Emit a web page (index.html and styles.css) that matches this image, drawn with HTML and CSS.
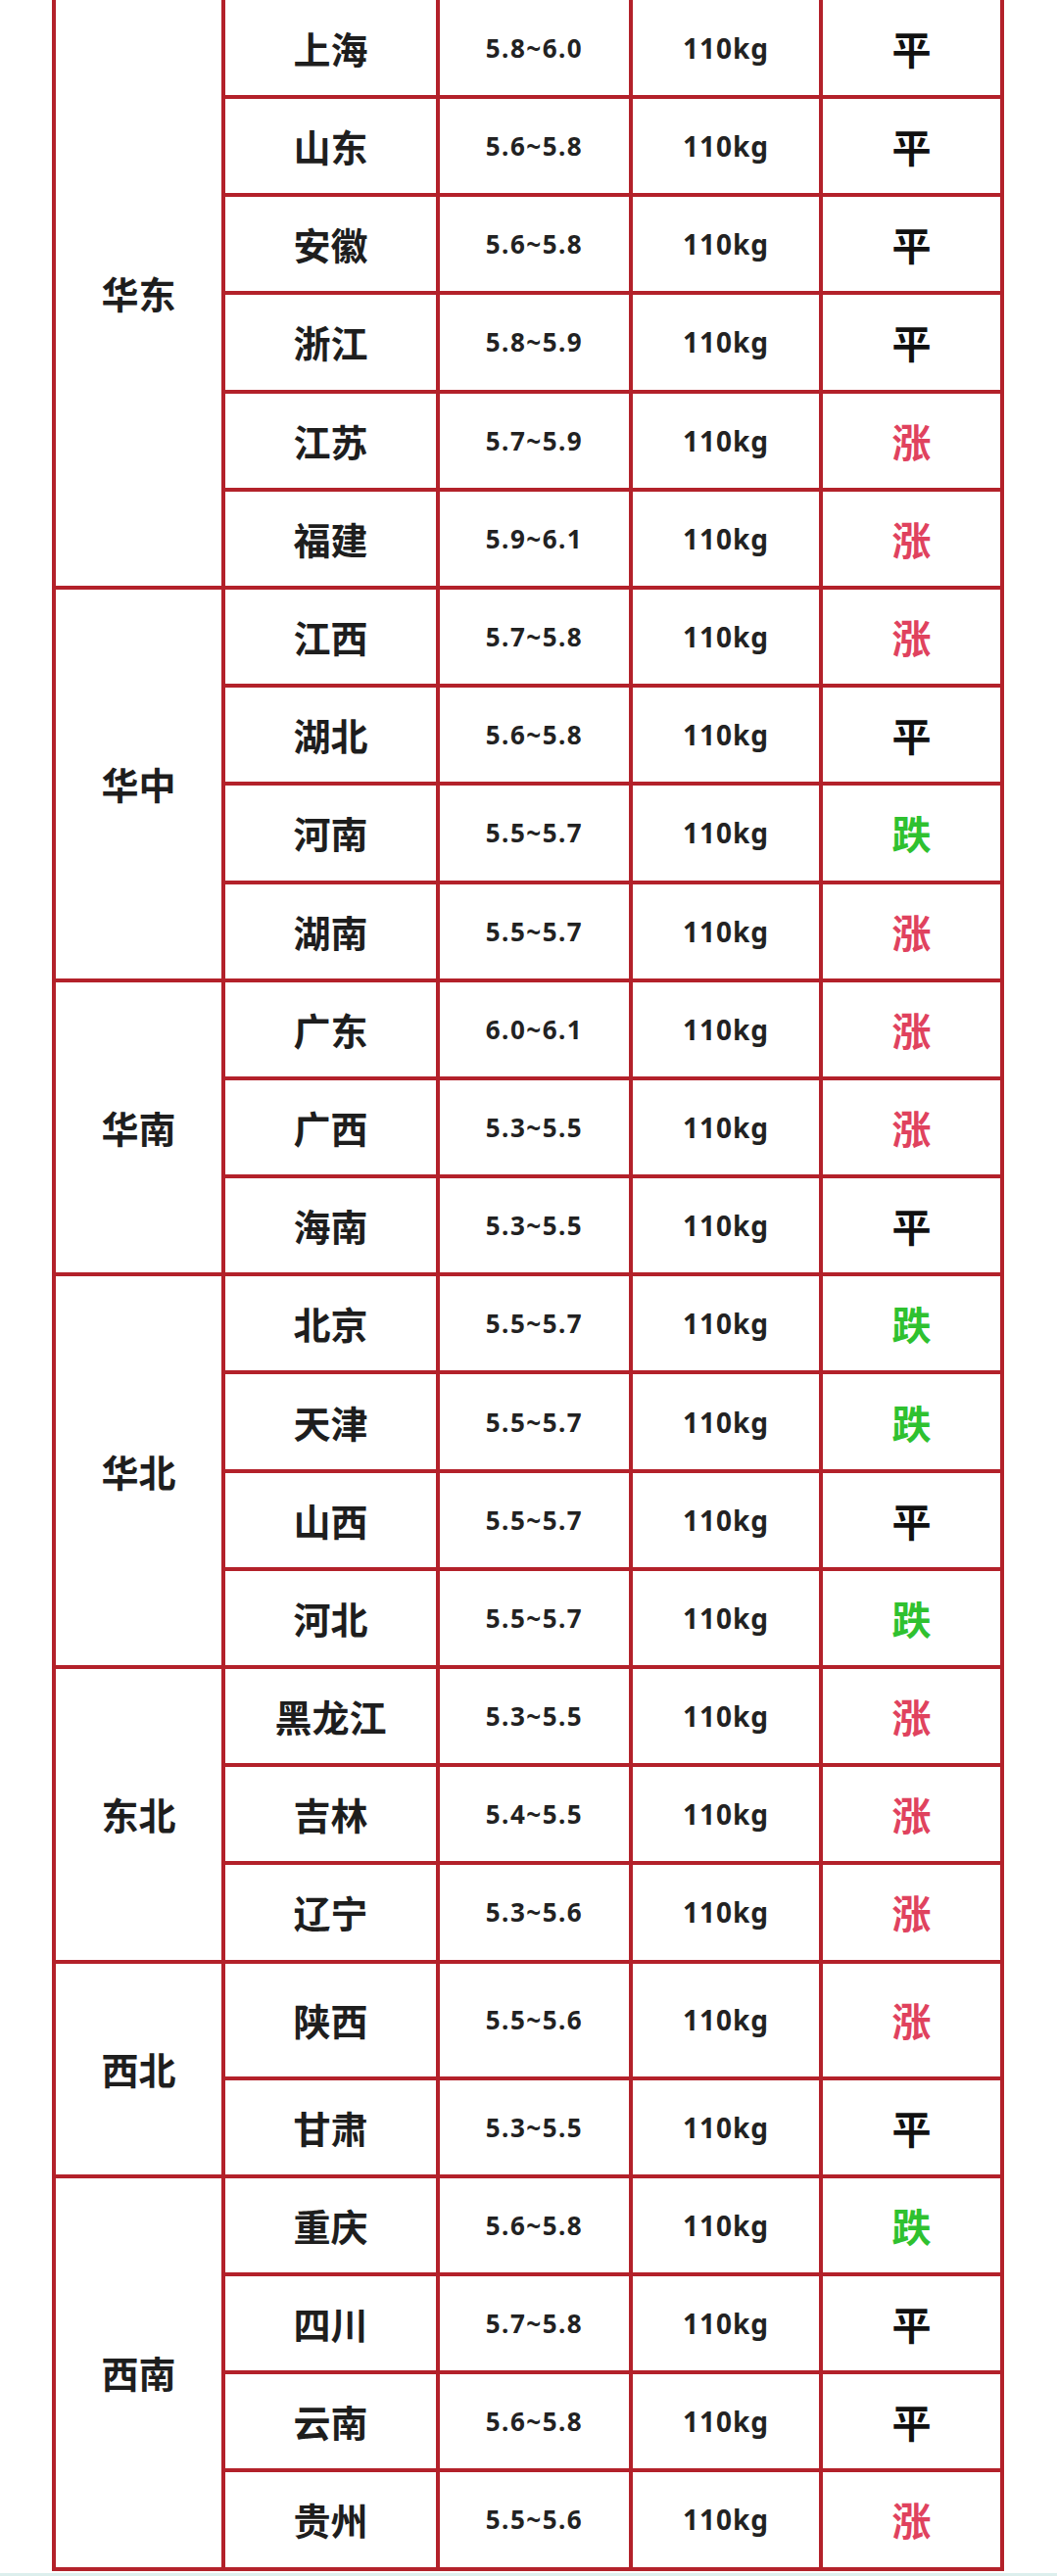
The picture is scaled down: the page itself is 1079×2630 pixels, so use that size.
FILE: index.html
```html
<!DOCTYPE html>
<html lang="zh-CN">
<head>
<meta charset="utf-8">
<title>生猪价格表</title>
<link rel="stylesheet" href="styles.css">
</head>
<body>
<div class="page">
<table class="price-table">
  <colgroup>
    <col class="c-region"><col class="c-prov"><col class="c-price"><col class="c-weight"><col class="c-trend">
  </colgroup>
  <tbody>
    <tr class="first"><td class="region" rowspan="6">华东</td><td class="prov">上海</td><td class="price">5.8~6.0</td><td class="weight">110kg</td><td class="trend flat">平</td></tr>
    <tr><td class="prov">山东</td><td class="price">5.6~5.8</td><td class="weight">110kg</td><td class="trend flat">平</td></tr>
    <tr><td class="prov">安徽</td><td class="price">5.6~5.8</td><td class="weight">110kg</td><td class="trend flat">平</td></tr>
    <tr><td class="prov">浙江</td><td class="price">5.8~5.9</td><td class="weight">110kg</td><td class="trend flat">平</td></tr>
    <tr><td class="prov">江苏</td><td class="price">5.7~5.9</td><td class="weight">110kg</td><td class="trend up">涨</td></tr>
    <tr><td class="prov">福建</td><td class="price">5.9~6.1</td><td class="weight">110kg</td><td class="trend up">涨</td></tr>

    <tr><td class="region" rowspan="4">华中</td><td class="prov">江西</td><td class="price">5.7~5.8</td><td class="weight">110kg</td><td class="trend up">涨</td></tr>
    <tr><td class="prov">湖北</td><td class="price">5.6~5.8</td><td class="weight">110kg</td><td class="trend flat">平</td></tr>
    <tr><td class="prov">河南</td><td class="price">5.5~5.7</td><td class="weight">110kg</td><td class="trend down">跌</td></tr>
    <tr><td class="prov">湖南</td><td class="price">5.5~5.7</td><td class="weight">110kg</td><td class="trend up">涨</td></tr>

    <tr><td class="region" rowspan="3">华南</td><td class="prov">广东</td><td class="price">6.0~6.1</td><td class="weight">110kg</td><td class="trend up">涨</td></tr>
    <tr><td class="prov">广西</td><td class="price">5.3~5.5</td><td class="weight">110kg</td><td class="trend up">涨</td></tr>
    <tr><td class="prov">海南</td><td class="price">5.3~5.5</td><td class="weight">110kg</td><td class="trend flat">平</td></tr>

    <tr><td class="region" rowspan="4">华北</td><td class="prov">北京</td><td class="price">5.5~5.7</td><td class="weight">110kg</td><td class="trend down">跌</td></tr>
    <tr><td class="prov">天津</td><td class="price">5.5~5.7</td><td class="weight">110kg</td><td class="trend down">跌</td></tr>
    <tr><td class="prov">山西</td><td class="price">5.5~5.7</td><td class="weight">110kg</td><td class="trend flat">平</td></tr>
    <tr><td class="prov">河北</td><td class="price">5.5~5.7</td><td class="weight">110kg</td><td class="trend down">跌</td></tr>

    <tr><td class="region" rowspan="3">东北</td><td class="prov">黑龙江</td><td class="price">5.3~5.5</td><td class="weight">110kg</td><td class="trend up">涨</td></tr>
    <tr><td class="prov">吉林</td><td class="price">5.4~5.5</td><td class="weight">110kg</td><td class="trend up">涨</td></tr>
    <tr><td class="prov">辽宁</td><td class="price">5.3~5.6</td><td class="weight">110kg</td><td class="trend up">涨</td></tr>

    <tr class="tall"><td class="region" rowspan="2">西北</td><td class="prov">陕西</td><td class="price">5.5~5.6</td><td class="weight">110kg</td><td class="trend up">涨</td></tr>
    <tr><td class="prov">甘肃</td><td class="price">5.3~5.5</td><td class="weight">110kg</td><td class="trend flat">平</td></tr>

    <tr><td class="region" rowspan="4">西南</td><td class="prov">重庆</td><td class="price">5.6~5.8</td><td class="weight">110kg</td><td class="trend down">跌</td></tr>
    <tr><td class="prov">四川</td><td class="price">5.7~5.8</td><td class="weight">110kg</td><td class="trend flat">平</td></tr>
    <tr><td class="prov">云南</td><td class="price">5.6~5.8</td><td class="weight">110kg</td><td class="trend flat">平</td></tr>
    <tr><td class="prov">贵州</td><td class="price">5.5~5.6</td><td class="weight">110kg</td><td class="trend up">涨</td></tr>
  </tbody>
</table>
<div class="bottom-strip"></div>
</div>
</body>
</html>
```

FILE: styles.css
```css
html, body {
  margin: 0;
  padding: 0;
  background: #ffffff;
}

.page {
  width: 1079px;
  height: 2630px;
  overflow: hidden;
  font-family: "Noto Sans CJK SC", "Noto Sans", sans-serif;
  color: #1c1c1c;
}

.price-table {
  margin-left: 53px;
  width: 972px;
  table-layout: fixed;
  border-collapse: separate;
  border-spacing: 0;
  border-left: 4px solid #b3212a;
}

.c-region { width: 173px; }
.c-prov { width: 219px; }
.c-price { width: 197px; }
.c-weight { width: 194px; }
.c-trend { width: 185px; }

.price-table tr {
  height: 100.2px;
}

.price-table tr.first {
  height: 101px;
}

.price-table tr.tall {
  height: 119px;
}

.price-table td {
  padding: 0;
  text-align: center;
  vertical-align: middle;
  border-right: 4px solid #b3212a;
  border-bottom: 4px solid #b3212a;
  font-weight: 700;
  line-height: 1;
}

.region,
.prov {
  font-size: 38px;
  color: #1e1e1e;
}

.price {
  font-family: "Noto Sans", sans-serif;
  font-size: 26px;
  letter-spacing: 1.5px;
  color: #222222;
}

.weight {
  font-family: "Noto Sans", sans-serif;
  font-size: 28px;
  letter-spacing: 1px;
  color: #222222;
}

.trend {
  font-size: 40px;
}

.trend.flat { color: #111111; }
.trend.up { color: #e0425e; }
.trend.down { color: #2fc12f; }

.bottom-strip {
  margin-top: 2px;
  height: 3px;
  background: #dcefed;
}
```
